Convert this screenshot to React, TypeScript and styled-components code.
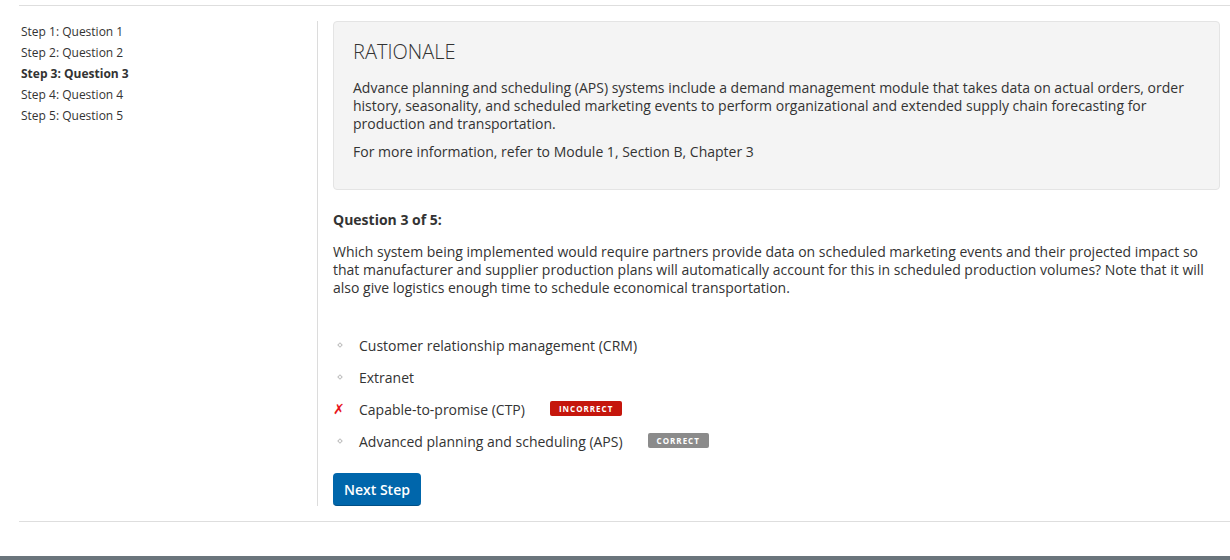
import React from "react";
import styled, { createGlobalStyle } from "styled-components";

const Global = createGlobalStyle`
  html, body { margin: 0; padding: 0; background: #fff; }
  body { font-family: "Open Sans", "Liberation Sans", sans-serif; color: #333; overflow: hidden; }
  * { box-sizing: border-box; }
`;

const Page = styled.div`
  padding: 5px 0 0 19px;
`;

const Rule = styled.div`
  height: 1px;
  background: #dedede;
`;

const Row = styled.div`
  display: flex;
  margin-top: 15px;
`;

const Sidebar = styled.nav`
  width: 298px;
  flex: none;
  padding-left: 2px;
`;

const StepItem = styled.div<{ $active?: boolean }>`
  font-size: 12px;
  line-height: 21px;
  font-weight: ${(p) => (p.$active ? 700 : 400)};
  color: #333;
`;

const Main = styled.main`
  flex: 1;
  border-left: 1px solid #dcdcdc;
  padding: 0 10px 0 15px;
`;

const RationaleBox = styled.section`
  background: #f4f4f4;
  border: 1px solid #e4e4e4;
  border-radius: 4px;
  padding: 16px 19px 19px;
  height: 169px;
`;

const RationaleTitle = styled.h2`
  margin: 0 0 13px;
  font-size: 20px;
  line-height: 28px;
  font-weight: 300;
  color: #333;
`;

const Para = styled.p`
  margin: 0 0 10px;
  font-size: 14px;
  line-height: 18px;
`;

const QuestionHead = styled.h3`
  margin: 21px 0 14px;
  font-size: 14px;
  line-height: 18px;
  font-weight: 700;
`;

const QuestionText = styled.p`
  margin: 0;
  font-size: 14px;
  line-height: 18px;
`;

const Options = styled.ul`
  list-style: none;
  margin: 32px 0 0;
  padding: 0;
`;

const Option = styled.li`
  display: flex;
  align-items: center;
  height: 32px;
  font-size: 14px;
`;

const Marker = styled.span`
  width: 26px;
  flex: none;
  display: flex;
  align-items: center;
`;

const Diamond = styled.span`
  display: inline-block;
  width: 4px;
  height: 4px;
  margin-left: 5px;
  border: 1px solid #bdbdbd;
  transform: rotate(45deg);
`;

const Cross = styled.span`
  color: #e8141b;
  font-family: "DejaVu Sans", sans-serif;
  font-size: 14px;
  font-weight: 700;
  font-style: italic;
  line-height: 1;
`;

const Badge = styled.span<{ $tone: "bad" | "good" }>`
  margin-left: 25px;
  display: inline-flex;
  align-items: center;
  justify-content: center;
  height: 15px;
  padding: 0 9px;
  border-radius: 2px;
  font-size: 8px;
  font-weight: 700;
  letter-spacing: 1px;
  color: #fff;
  background: ${(p) => (p.$tone === "bad" ? "#c5160c" : "#8b8b8b")};
  position: relative;
  top: -1px;
`;

const NextButton = styled.button`
  margin-top: 16px;
  display: block;
  height: 33px;
  padding: 0 11px;
  background: #0066ab;
  border: none;
  border-bottom: 1px solid #004f86;
  border-radius: 4px;
  color: #fff;
  font-family: "Open Sans", "Liberation Sans", sans-serif;
  font-size: 14px;
  font-weight: 600;
  cursor: pointer;
`;

const BottomRule = styled(Rule)`
  margin-top: 15px;
`;

const FooterBar = styled.div`
  margin: 34px 0 0 -19px;
  height: 20px;
  background: #6b757c;
`;

const steps = ["Step 1: Question 1", "Step 2: Question 2", "Step 3: Question 3", "Step 4: Question 4", "Step 5: Question 5"];

type Opt = { label: string; mark?: "x"; badge?: "bad" | "good" };
const options: Opt[] = [
  { label: "Customer relationship management (CRM)" },
  { label: "Extranet" },
  { label: "Capable-to-promise (CTP)", mark: "x", badge: "bad" },
  { label: "Advanced planning and scheduling (APS)", badge: "good" },
];

export default function App() {
  return (
    <>
      <Global />
      <Page>
        <Rule />
        <Row>
          <Sidebar>
            {steps.map((s, i) => (
              <StepItem key={s} $active={i === 2}>
                {s}
              </StepItem>
            ))}
          </Sidebar>
          <Main>
            <RationaleBox>
              <RationaleTitle>RATIONALE</RationaleTitle>
              <Para>
                Advance planning and scheduling (APS) systems include a demand management module that takes data on actual orders, order
                history, seasonality, and scheduled marketing events to perform organizational and extended supply chain forecasting for
                production and transportation.
              </Para>
              <Para>For more information, refer to Module 1, Section B, Chapter 3</Para>
            </RationaleBox>
            <QuestionHead>Question 3 of 5:</QuestionHead>
            <QuestionText>
              Which system being implemented would require partners provide data on scheduled marketing events and their projected impact so
              that manufacturer and supplier production plans will automatically account for this in scheduled production volumes? Note that it will
              also give logistics enough time to schedule economical transportation.
            </QuestionText>
            <Options>
              {options.map((o) => (
                <Option key={o.label}>
                  <Marker>{o.mark === "x" ? <Cross>✗</Cross> : <Diamond />}</Marker>
                  <span>{o.label}</span>
                  {o.badge && <Badge $tone={o.badge}>{o.badge === "bad" ? "INCORRECT" : "CORRECT"}</Badge>}
                </Option>
              ))}
            </Options>
            <NextButton>Next Step</NextButton>
          </Main>
        </Row>
        <BottomRule />
        <FooterBar />
      </Page>
    </>
  );
}
